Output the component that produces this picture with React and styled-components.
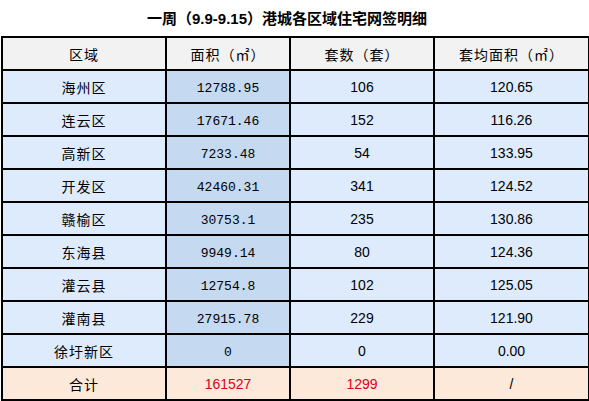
import React from "react";
import styled, { createGlobalStyle } from "styled-components";

const Global = createGlobalStyle`
  html, body { margin: 0; padding: 0; background: #ffffff; }
  body { font-family: "Liberation Sans", "Noto Sans CJK SC", sans-serif; }
`;

const Page = styled.div`
  width: 589px;
  height: 401px;
  padding: 0 0 0 1px;
  box-sizing: border-box;
  overflow: hidden;
`;

const Title = styled.div`
  height: 36px;
  display: flex;
  align-items: center;
  justify-content: center;
  font-family: "Liberation Sans", "Noto Sans CJK SC", sans-serif;
  font-weight: 700;
  font-size: 15px;
  color: #000;
  padding-right: 16px;
  padding-bottom: 1px;
  box-sizing: border-box;
`;

const Table = styled.table`
  border-collapse: collapse;
  table-layout: fixed;
  width: 587px;
`;

const Row = styled.tr`
  height: 33px;
`;

const cellBg = {
  head: "#f2f2f2",
  data: "#ddebfd",
  dark: "#c5d9f1",
  total: "#fde9d9",
};

const Cell = styled.td`
  border: 2px solid #000;
  padding: ${(p) => (p.$mono ? "3px 0 0 0" : "0")};
  text-align: center;
  vertical-align: middle;
  background: ${(p) => cellBg[p.$bg || "data"]};
  color: ${(p) => (p.$red ? "#e0001b" : "#000")};
  font-size: ${(p) => (p.$mono ? "13px" : "14px")};
  font-family: ${(p) =>
    p.$mono
      ? '"Liberation Mono", "Noto Sans CJK SC", monospace'
      : p.$cjk
      ? '"Noto Sans CJK SC", sans-serif'
      : '"Liberation Sans", "Noto Sans CJK SC", sans-serif'};
  line-height: 1;
  letter-spacing: ${(p) => (p.$cjk ? "1px" : "0")};
`;

const rows = [
  ["海州区", "12788.95", "106", "120.65"],
  ["连云区", "17671.46", "152", "116.26"],
  ["高新区", "7233.48", "54", "133.95"],
  ["开发区", "42460.31", "341", "124.52"],
  ["赣榆区", "30753.1", "235", "130.86"],
  ["东海县", "9949.14", "80", "124.36"],
  ["灌云县", "12754.8", "102", "125.05"],
  ["灌南县", "27915.78", "229", "121.90"],
  ["徐圩新区", "0", "0", "0.00"],
];

export default function App() {
  return (
    <>
      <Global />
      <Page>
        <Title>一周（9.9-9.15）港城各区域住宅网签明细</Title>
        <Table>
          <colgroup>
            <col style={{ width: 164 }} />
            <col style={{ width: 124 }} />
            <col style={{ width: 144 }} />
            <col style={{ width: 155 }} />
          </colgroup>
          <tbody>
            <Row>
              <Cell $bg="head" $cjk>区域</Cell>
              <Cell $bg="head" $cjk>面积（㎡）</Cell>
              <Cell $bg="head" $cjk>套数（套）</Cell>
              <Cell $bg="head" $cjk>套均面积（㎡）</Cell>
            </Row>
            {rows.map((r) => (
              <Row key={r[0]}>
                <Cell $cjk>{r[0]}</Cell>
                <Cell $bg="dark" $mono>{r[1]}</Cell>
                <Cell>{r[2]}</Cell>
                <Cell>{r[3]}</Cell>
              </Row>
            ))}
            <Row>
              <Cell $bg="total" $cjk>合计</Cell>
              <Cell $bg="total" $red>161527</Cell>
              <Cell $bg="total" $red>1299</Cell>
              <Cell $bg="total">/</Cell>
            </Row>
          </tbody>
        </Table>
      </Page>
    </>
  );
}
